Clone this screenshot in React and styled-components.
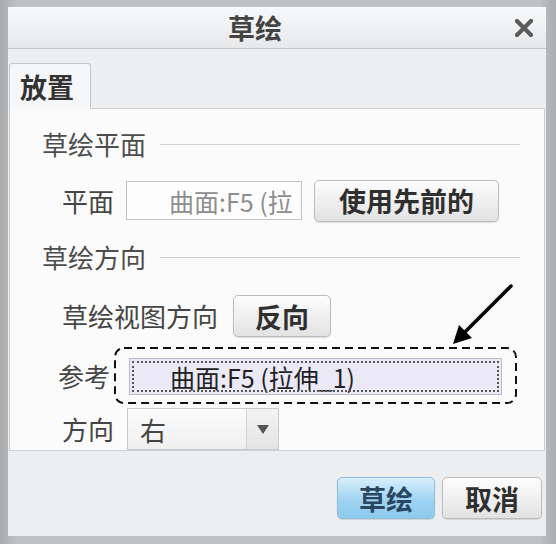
import styled, { createGlobalStyle } from "styled-components";

const GlobalStyle = createGlobalStyle`
  html, body {
    margin: 0;
    padding: 0;
    background: #ffffff;
  }
  body {
    font-family: "Noto Sans CJK SC", "Noto Sans", sans-serif;
  }
  * {
    box-sizing: border-box;
  }
`;

const Frame = styled.div`
  width: 556px;
  height: 544px;
  padding: 7px 10px 8px 8px;
  background: linear-gradient(to right, #a9abad, #bfc1c3 3%, #bfc1c3 97%, #a9abad);
  display: flex;
  flex-direction: column;
`;

const TitleBar = styled.div`
  height: 42px;
  flex: none;
  display: flex;
  align-items: center;
  background: linear-gradient(#f8f9fa, #e6e8ea);
  border-bottom: 1px solid #c4c7ca;
`;

const Title = styled.div`
  flex: 1;
  text-align: center;
  font-size: 27px;
  font-weight: 700;
  line-height: 30px;
  color: #434343;
`;

const CloseButton = styled.div`
  width: 44px;
  height: 100%;
  display: flex;
  align-items: center;
  justify-content: center;
`;

const Body = styled.div`
  flex: 1;
  display: flex;
  flex-direction: column;
  background: #eceef0;
  padding-top: 14px;
`;

const TabStrip = styled.div`
  display: flex;
  padding-left: 1px;
  position: relative;
  z-index: 1;
  margin-bottom: -1px;
`;

const Tab = styled.div`
  width: 82px;
  height: 46px;
  padding-left: 10px;
  display: flex;
  align-items: center;
  background: #f6f7f8;
  border: 1px solid #c6c9cc;
  border-bottom: none;
  border-radius: 3px 3px 0 0;
  font-size: 27px;
  font-weight: 700;
  color: #333;
`;

const Panel = styled.div`
  position: relative;
  height: 343px;
  flex: none;
  margin: 0 1px;
  padding: 20px 24px 0 32px;
  background: #fbfbfb;
  border: 1px solid #cdd0d3;
  overflow: hidden;
`;

const SectionHead = styled.div`
  display: flex;
  align-items: center;
  gap: 14px;
  height: 30px;
  margin-top: ${(p) => p.$top || 0}px;
  font-size: 26px;
  line-height: 30px;
  color: #4d4d4d;
  &::after {
    content: "";
    flex: 1;
    height: 1px;
    background: #cfd1d3;
  }
`;

const Row = styled.div`
  display: flex;
  align-items: center;
  gap: ${(p) => p.$gap || 15}px;
  height: ${(p) => p.$height || 42}px;
  margin-top: ${(p) => p.$top || 0}px;
  padding-left: ${(p) => p.$indent || 20}px;
`;

const Label = styled.span`
  font-size: 26px;
  line-height: 30px;
  color: #454545;
  white-space: nowrap;
`;

const TextBox = styled.div`
  width: 176px;
  height: 39px;
  padding-left: 42px;
  display: flex;
  align-items: center;
  background: #fdfdfd;
  border: 1px solid #bfc3c6;
  font-size: 25px;
  color: #8d8d8d;
  white-space: nowrap;
  overflow: hidden;
`;

const Button = styled.div`
  width: ${(p) => p.$width}px;
  height: 42px;
  flex: none;
  display: flex;
  align-items: center;
  justify-content: center;
  border-radius: 5px;
  border: 1px solid ${(p) => (p.$primary ? "#8fbddc" : "#bcbcbc")};
  background: ${(p) =>
    p.$primary
      ? "linear-gradient(#d9effc, #9fd4f2 55%, #8ccbee)"
      : "linear-gradient(#fdfdfd, #eeeeee 55%, #e2e2e2)"};
  box-shadow: 0 1px 1px rgba(0, 0, 0, 0.12);
  font-size: 27px;
  font-weight: 700;
  color: ${(p) => (p.$primary ? "#2b4660" : "#2f2f2f")};
`;

const Highlight = styled.div`
  position: relative;
  width: 403px;
  height: 57px;
  padding: 11px 15px 9px;
`;

const DashOverlay = styled.svg`
  position: absolute;
  inset: 0;
  pointer-events: none;
`;

const RefField = styled.div`
  height: 37px;
  padding-left: 40px;
  display: flex;
  align-items: center;
  background: #ece9f7;
  border: 1px solid #bbbac6;
  outline: 2px dotted #555;
  outline-offset: -5px;
  font-size: 25px;
  color: #222;
  white-space: nowrap;
  overflow: hidden;
`;

const Select = styled.div`
  width: 152px;
  height: 42px;
  display: flex;
  background: linear-gradient(#fbfbfb, #efefef);
  border: 1px solid #cacaca;
`;

const SelectValue = styled.div`
  flex: 1;
  padding-left: 12px;
  display: flex;
  align-items: center;
  font-size: 26px;
  color: #444;
`;

const SelectArrow = styled.div`
  width: 32px;
  display: flex;
  align-items: center;
  justify-content: center;
  border-left: 1px solid #d3d3d3;
  background: linear-gradient(#f3f3f3, #e4e4e4);
  &::before {
    content: "";
    border-left: 6px solid transparent;
    border-right: 6px solid transparent;
    border-top: 9px solid #555;
  }
`;

const Pointer = styled.svg`
  position: absolute;
  left: 435px;
  top: 171px;
`;

const Footer = styled.div`
  flex: 1;
  display: flex;
  justify-content: flex-end;
  align-items: flex-start;
  gap: 7px;
  padding: 26px 4px 0 0;
`;

export default function App() {
  return (
    <>
      <GlobalStyle />
      <Frame>
        <TitleBar>
          <Title>草绘</Title>
          <CloseButton>
            <svg width="18" height="18" viewBox="0 0 18 18">
              <path d="M2 2 L16 16 M16 2 L2 16" stroke="#5b5b5b" strokeWidth="4.2" strokeLinecap="square" />
            </svg>
          </CloseButton>
        </TitleBar>
        <Body>
          <TabStrip>
            <Tab>放置</Tab>
          </TabStrip>
          <Panel>
            <SectionHead>草绘平面</SectionHead>
            <Row $top={20} $height={43} $gap={12}>
              <Label>平面</Label>
              <TextBox>曲面:F5 (拉</TextBox>
              <Button $width={185}>使用先前的</Button>
            </Row>
            <SectionHead $top={20}>草绘方向</SectionHead>
            <Row $top={23}>
              <Label>草绘视图方向</Label>
              <Button $width={98}>反向</Button>
            </Row>
            <Row $top={10} $height={57} $gap={4} $indent={16}>
              <Label>参考</Label>
              <Highlight>
                <RefField>曲面:F5 (拉伸_1)</RefField>
                <DashOverlay width="403" height="57" viewBox="0 0 403 57">
                  <rect x="1" y="1" width="401" height="55" rx="9" fill="none" stroke="#111" strokeWidth="2" strokeDasharray="8 5" />
                </DashOverlay>
              </Highlight>
            </Row>
            <Row $top={4} $gap={13}>
              <Label>方向</Label>
              <Select>
                <SelectValue>右</SelectValue>
                <SelectArrow />
              </Select>
            </Row>
            <Pointer width="76" height="72" viewBox="0 0 76 72">
              <line x1="66" y1="6" x2="20" y2="52" stroke="#000" strokeWidth="3.5" strokeLinecap="round" />
              <polygon points="8,64 27,58 14,45" fill="#000" />
            </Pointer>
          </Panel>
          <Footer>
            <Button $primary $width={98}>草绘</Button>
            <Button $width={100}>取消</Button>
          </Footer>
        </Body>
      </Frame>
    </>
  );
}
